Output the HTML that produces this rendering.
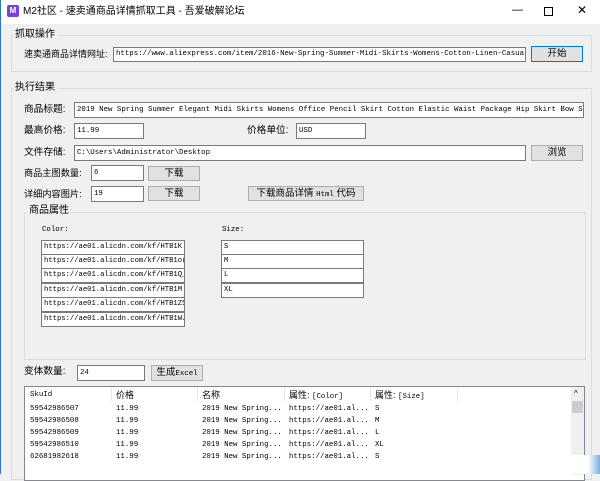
<!DOCTYPE html>
<html><head><meta charset="utf-8"><style>
*{box-sizing:border-box;margin:0;padding:0}
body{width:600px;height:474px;overflow:hidden;background:#f0f0f0;position:relative;font-family:"Liberation Sans","Noto Sans CJK SC",sans-serif;font-size:9px;color:#000}
.a{position:absolute}
.t{position:absolute;white-space:nowrap;line-height:12px}
.in{position:absolute;background:#fff;border:1px solid #7a7a7a;font-family:"Liberation Mono","Noto Sans CJK SC",monospace;font-size:7.4px;line-height:14px;padding-left:2px;overflow:hidden;white-space:nowrap}
.btn{position:absolute;background:#e1e1e1;border:1px solid #adadad;text-align:center;font-size:9.5px;line-height:14px;white-space:nowrap}
.grp{position:absolute;border:1px solid #dcdcdc}
.gl{position:absolute;background:#f0f0f0;padding:0 2px;font-size:10px;line-height:12px}
.cell{position:absolute;background:#fff;border:1px solid #7a7a7a;font-family:"Liberation Mono",monospace;font-size:7.2px;line-height:13px;padding-left:2px;overflow:hidden;white-space:nowrap}
.mono{font-family:"Liberation Mono","Noto Sans CJK SC",monospace;font-size:7.4px}
.lb{position:absolute;white-space:nowrap;line-height:12px;font-size:9.7px}
</style></head><body>
<div class="a" style="left:0;top:0;width:600px;height:24px;background:#fff"></div>
<div class="a" style="left:0;top:0;width:1px;height:474px;background:#2b79c9"></div>
<div class="a" style="left:7px;top:5px;width:12px;height:12px;background:#7b3fe0;border-radius:2px;color:#fff;font-size:8px;font-weight:bold;text-align:center;line-height:12px">M</div>
<div class="t" style="left:23px;top:6px;font-size:10px">M2社区 - 速卖通商品详情抓取工具 - 吾爱破解论坛</div>
<div class="t" style="left:512px;top:4px;font-size:11px">—</div>
<div class="a" style="left:544px;top:7px;width:9px;height:9px;border:1px solid #000"></div>
<div class="t" style="left:577px;top:4px;font-size:12px">✕</div>

<div class="grp" style="left:11px;top:35px;width:581px;height:37px"></div>
<div class="gl" style="left:13px;top:29px">抓取操作</div>
<div class="lb" style="left:24px;top:48px;font-size:9px">速卖通商品详情网址:</div>
<div class="in" style="left:113px;top:47px;width:413px;height:15px;line-height:13px">https://www.aliexpress.com/item/2016-New-Spring-Summer-Midi-Skirts-Womens-Cotton-Linen-Casual-M</div>
<div class="btn" style="left:531px;top:46px;width:52px;height:16px;border-color:#0078d7">开始</div>

<div class="grp" style="left:11px;top:88px;width:581px;height:392px"></div>
<div class="gl" style="left:13px;top:82px">执行结果</div>
<div class="lb" style="left:24px;top:104px">商品标题:</div>
<div class="in" style="left:74px;top:102px;width:510px;height:16px">2019 New Spring Summer Elegant Midi Skirts Womens Office Pencil Skirt Cotton Elastic Waist Package Hip Skirt Bow Skir</div>
<div class="lb" style="left:24px;top:125px">最高价格:</div>
<div class="in" style="left:74px;top:123px;width:70px;height:16px">11.99</div>
<div class="lb" style="left:247px;top:125px">价格单位:</div>
<div class="in" style="left:296px;top:123px;width:70px;height:16px">USD</div>
<div class="lb" style="left:24px;top:147px">文件存储:</div>
<div class="in" style="left:74px;top:145px;width:452px;height:16px">C:\Users\Administrator\Desktop</div>
<div class="btn" style="left:531px;top:145px;width:52px;height:16px">浏览</div>
<div class="lb" style="left:24px;top:167px;font-size:9.2px">商品主图数量:</div>
<div class="in" style="left:91px;top:165px;width:53px;height:16px">6</div>
<div class="btn" style="left:148px;top:166px;width:52px;height:15px">下载</div>
<div class="lb" style="left:24px;top:188px;font-size:9.2px">详细内容图片:</div>
<div class="in" style="left:91px;top:186px;width:53px;height:16px">19</div>
<div class="btn" style="left:148px;top:186px;width:52px;height:15px">下载</div>
<div class="btn" style="left:248px;top:186px;width:116px;height:15px">下载商品详情 <span class="mono">Html</span> 代码</div>

<div class="grp" style="left:24px;top:212px;width:562px;height:148px"></div>
<div class="gl" style="left:27px;top:205px">商品属性</div>
<div class="t mono" style="left:42px;top:224px">Color:</div>
<div class="t mono" style="left:222px;top:224px">Size:</div>
<div class="cell" style="left:41px;top:240px;width:144px;height:15px">https://ae01.alicdn.com/kf/HTB1K</div>
<div class="cell" style="left:41px;top:254px;width:144px;height:15px">https://ae01.alicdn.com/kf/HTB1o(</div>
<div class="cell" style="left:41px;top:268px;width:144px;height:15px">https://ae01.alicdn.com/kf/HTB1Q_</div>
<div class="cell" style="left:41px;top:283px;width:144px;height:15px">https://ae01.alicdn.com/kf/HTB1M</div>
<div class="cell" style="left:41px;top:297px;width:144px;height:15px">https://ae01.alicdn.com/kf/HTB1Z5</div>
<div class="cell" style="left:41px;top:312px;width:144px;height:15px">https://ae01.alicdn.com/kf/HTB1WJ</div>
<div class="cell" style="left:221px;top:240px;width:143px;height:15px">S</div>
<div class="cell" style="left:221px;top:254px;width:143px;height:15px">M</div>
<div class="cell" style="left:221px;top:268px;width:143px;height:15px">L</div>
<div class="cell" style="left:221px;top:283px;width:143px;height:15px">XL</div>

<div class="lb" style="left:24px;top:366px">变体数量:</div>
<div class="in" style="left:77px;top:365px;width:68px;height:16px">24</div>
<div class="btn" style="left:151px;top:365px;width:52px;height:16px">生成<span class="mono">Excel</span></div>

<div class="a" style="left:24px;top:386px;width:561px;height:95px;background:#fff;border:1px solid #828790"></div>
<div class="a" style="left:111px;top:387px;width:1px;height:14px;background:#e5e5e5"></div>
<div class="a" style="left:197px;top:387px;width:1px;height:14px;background:#e5e5e5"></div>
<div class="a" style="left:284px;top:387px;width:1px;height:14px;background:#e5e5e5"></div>
<div class="a" style="left:370px;top:387px;width:1px;height:14px;background:#e5e5e5"></div>
<div class="a" style="left:457px;top:387px;width:1px;height:14px;background:#e5e5e5"></div>
<div class="a" style="left:571px;top:387px;width:13px;height:88px;background:#f0f0f0"></div>
<div class="t" style="left:574px;top:388px;font-size:8px">^</div>
<div class="a" style="left:572px;top:401px;width:11px;height:12px;background:#cdcdcd"></div>
<div class="t mono" style="left:30px;top:389px">SkuId</div>
<div class="t" style="left:116px;top:389px">价格</div>
<div class="t" style="left:202px;top:389px">名称</div>
<div class="t" style="left:289px;top:389px">属性: <span class="mono">[Color]</span></div>
<div class="t" style="left:375px;top:389px">属性: <span class="mono">[Size]</span></div>
<div class="a mono" style="left:30px;top:403px;line-height:12px;white-space:pre">59542986507
59542986508
59542986509
59542986510
62681982618</div>
<div class="a mono" style="left:116px;top:403px;line-height:12px;white-space:pre">11.99
11.99
11.99
11.99
11.99</div>
<div class="a mono" style="left:202px;top:403px;line-height:12px;white-space:pre">2019 New Spring...
2019 New Spring...
2019 New Spring...
2019 New Spring...
2019 New Spring...</div>
<div class="a mono" style="left:289px;top:403px;line-height:12px;white-space:pre">https://ae01.al...
https://ae01.al...
https://ae01.al...
https://ae01.al...
https://ae01.al...</div>
<div class="a mono" style="left:375px;top:403px;line-height:12px;white-space:pre">S
M
L
XL
S</div>
<div class="a" style="left:520px;top:455px;width:80px;height:19px;background:linear-gradient(90deg,rgba(255,255,255,0),#fff 40%,#fff 85%,#7ab0e0)"></div>
</body></html>
